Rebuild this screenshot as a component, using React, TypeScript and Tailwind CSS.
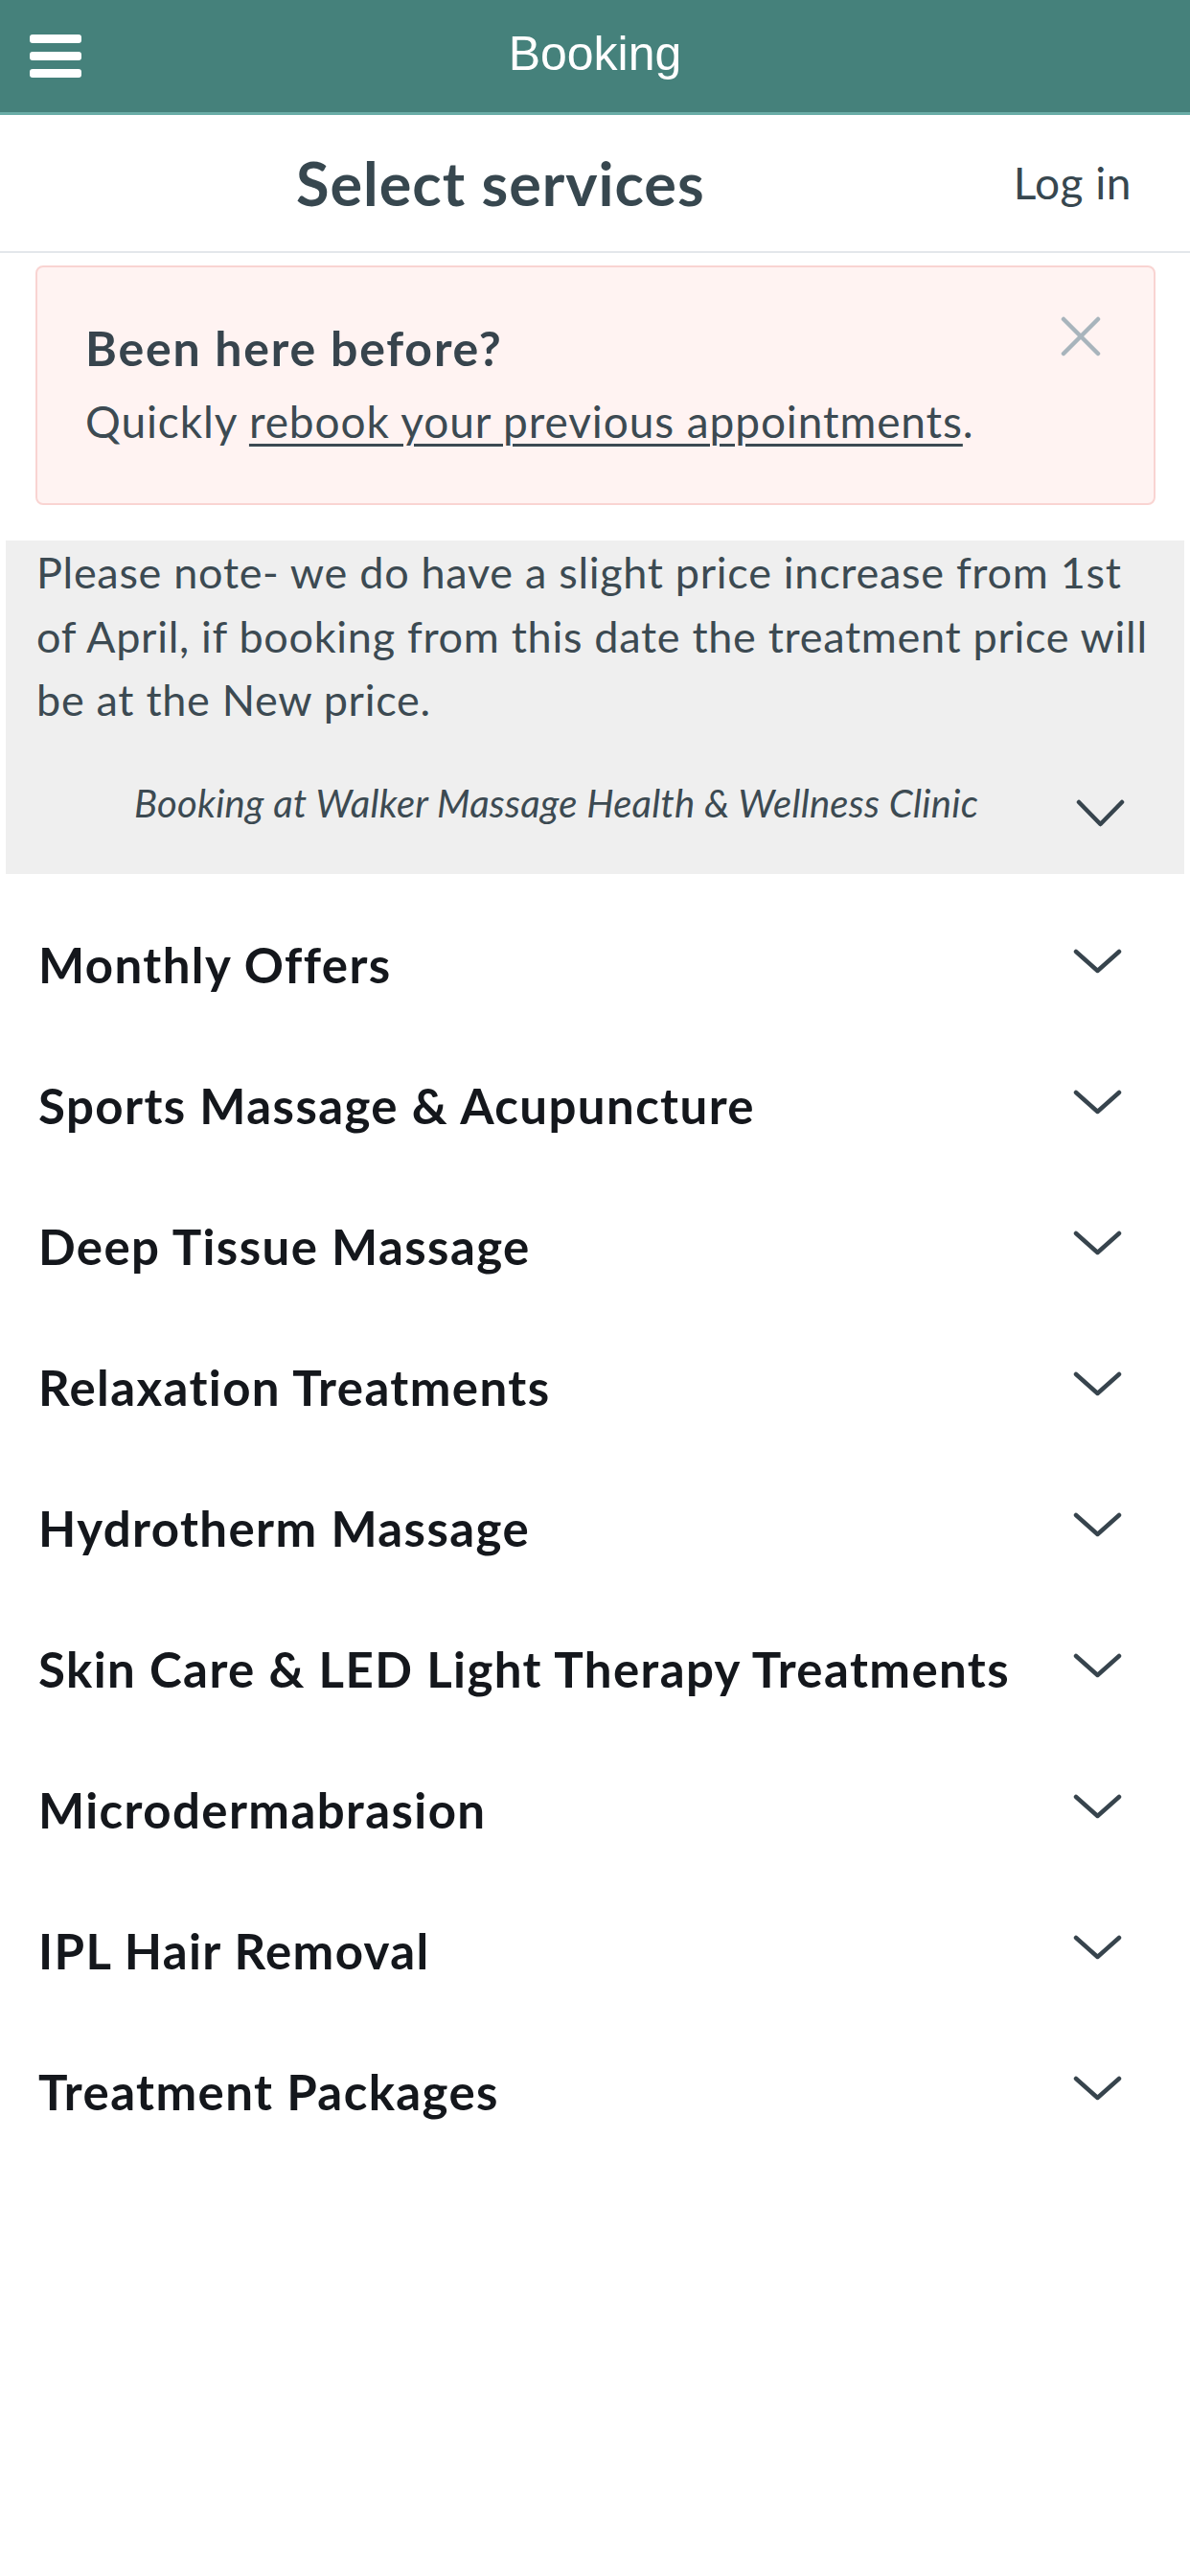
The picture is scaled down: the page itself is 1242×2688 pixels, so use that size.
const categories = [
  "Monthly Offers",
  "Sports Massage & Acupuncture",
  "Deep Tissue Massage",
  "Relaxation Treatments",
  "Hydrotherm Massage",
  "Skin Care & LED Light Therapy Treatments",
  "Microdermabrasion",
  "IPL Hair Removal",
  "Treatment Packages",
];

const Chevron = ({ tall = false }: { tall?: boolean }) => (
  <svg
    width="51"
    height={tall ? 29 : 26}
    viewBox={tall ? "0 0 51 29" : "0 0 51 26"}
    fill="none"
    className="shrink-0"
  >
    <polyline
      points={tall ? "3,3 25.5,26 48,3" : "3,3 25.5,23 48,3"}
      stroke="#37444d"
      strokeWidth="4.5"
      strokeLinecap="round"
      strokeLinejoin="round"
    />
  </svg>
);

const App = () => {
  return (
    <div className="min-h-screen w-full bg-white font-[Lato,sans-serif]">
      {/* Top bar */}
      <header className="grid h-[120px] grid-cols-[1fr_auto_1fr] items-center border-b-[3px] border-[#6aada7] bg-[#45817b]">
        <div className="pl-[31px]">
          <div className="flex w-[54px] flex-col gap-[9px]">
            <span className="block h-[9px] rounded-[3px] bg-white" />
            <span className="block h-[9px] rounded-[3px] bg-white" />
            <span className="block h-[9px] rounded-[3px] bg-white" />
          </div>
        </div>
        <h1 className="mb-[6px] font-['Liberation_Sans',Arial,sans-serif] text-[50px] leading-none text-white">
          Booking
        </h1>
        <div />
      </header>

      {/* Page title */}
      <div className="flex h-[144px] items-center border-b-2 border-[#e3e7eb]">
        <h2 className="flex-1 text-center text-[63px] leading-[1.2] font-bold tracking-[1px] text-[#37474f]">
          Select services
        </h2>
        <span className="pr-[61px] pl-[13px] text-[46px] leading-[1.2] tracking-[0.5px] text-[#37474f]">
          Log in
        </span>
      </div>

      {/* Returning customer notice */}
      <div className="mt-[13px] mr-[36px] ml-[37px] h-[250px] rounded-[8px] border-2 border-[#f9d4d2] bg-[#fff3f2] pt-[54px] pr-[55px] pl-[50px]">
        <div className="flex items-start">
          <p className="flex-1 text-[50px] leading-[1.2] font-bold tracking-[1.8px] text-[#37444d]">
            Been here before?
          </p>
          <svg width="42" height="42" viewBox="0 0 42 42" className="-mt-[3px] shrink-0">
            <path d="M3 3 L39 39 M39 3 L3 39" stroke="#a8b4bc" strokeWidth="4.5" strokeLinecap="round" />
          </svg>
        </div>
        <p className="mt-[13px] text-[46px] leading-[67.5px] tracking-[0.9px] text-[#3c4a52]">
          Quickly{" "}
          <span className="underline decoration-[3px] underline-offset-[6px]">
            rebook your previous appointments
          </span>
          .
        </p>
      </div>

      {/* Price note + location */}
      <div className="mx-[6px] mt-[37px] bg-[#efefef]">
        <p className="pr-[20px] pl-[32px] text-[45px] leading-[66.5px] tracking-[0.7px] whitespace-nowrap text-[#3c4a52]">
          Please note- we do have a slight price increase from 1st
          <br />
          of April, if booking from this date the treatment price will
          <br />
          be at the New price.
        </p>
        <div className="flex items-start py-[45px] pr-[62px] pl-[32px]">
          <p className="flex-1 text-center text-[40px] leading-[58.5px] tracking-[0.25px] text-[#3c4a52] italic">
            Booking at Walker Massage Health &amp; Wellness Clinic
          </p>
          <div className="mt-[25px]">
            <Chevron tall />
          </div>
        </div>
      </div>

      {/* Service categories */}
      <ul className="mt-[21px]">
        {categories.map((name) => (
          <li key={name} className="flex h-[147px] items-center pr-[71px] pl-[40px]">
            <span className="flex-1 text-[51px] leading-[1.2] font-bold tracking-[1.4px] whitespace-nowrap text-[#14171c]">
              {name}
            </span>
            <div className="mb-[7px]">
              <Chevron />
            </div>
          </li>
        ))}
      </ul>
    </div>
  );
};

export default App;
